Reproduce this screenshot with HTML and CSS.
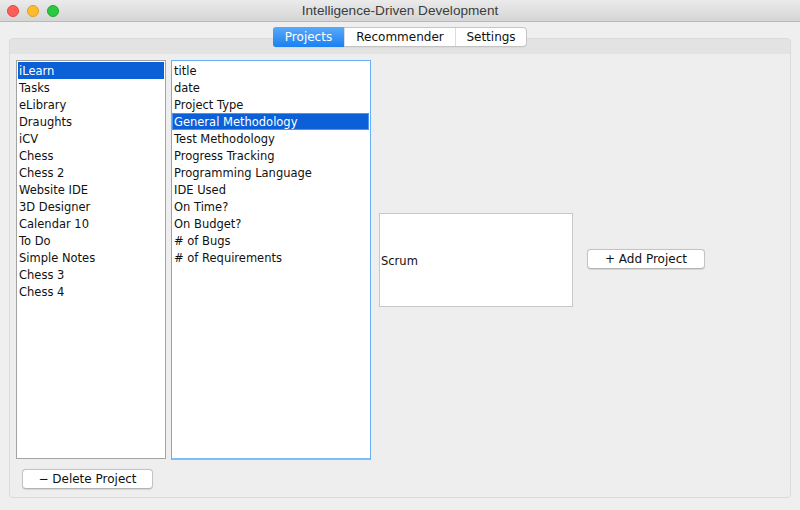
FILE: index.html
```html
<!DOCTYPE html>
<html>
<head>
<meta charset="utf-8">
<link rel="stylesheet" href="styles.css">
</head>
<body>
<div class="window">
  <div class="titlebar">
    <div class="lights">
      <span class="light red"></span>
      <span class="light yellow"></span>
      <span class="light green"></span>
    </div>
    <div class="title">Intelligence-Driven Development</div>
  </div>
  <div class="main">
    <div class="tabs">
      <div class="tab active t1">Projects</div>
      <div class="tab t2">Recommender</div>
      <div class="tab t3">Settings</div>
    </div>
    <div class="panel">
      <div class="content">
        <div class="leftcol">
          <div class="list list1">
            <div class="item sel">iLearn</div>
            <div class="item">Tasks</div>
            <div class="item">eLibrary</div>
            <div class="item">Draughts</div>
            <div class="item">iCV</div>
            <div class="item">Chess</div>
            <div class="item">Chess 2</div>
            <div class="item">Website IDE</div>
            <div class="item">3D Designer</div>
            <div class="item">Calendar 10</div>
            <div class="item">To Do</div>
            <div class="item">Simple Notes</div>
            <div class="item">Chess 3</div>
            <div class="item">Chess 4</div>
          </div>
          <div class="btn delete">&minus; Delete Project</div>
        </div>
        <div class="rightgroup">
          <div class="list list2">
            <div class="item">title</div>
            <div class="item">date</div>
            <div class="item">Project Type</div>
            <div class="item sel focus">General Methodology</div>
            <div class="item">Test Methodology</div>
            <div class="item">Progress Tracking</div>
            <div class="item">Programming Language</div>
            <div class="item">IDE Used</div>
            <div class="item">On Time?</div>
            <div class="item">On Budget?</div>
            <div class="item"># of Bugs</div>
            <div class="item"># of Requirements</div>
          </div>
          <div class="valuebox">Scrum</div>
          <div class="btn add">+ Add Project</div>
        </div>
      </div>
    </div>
  </div>
</div>
</body>
</html>
```
FILE: styles.css
```css
html, body {
  margin: 0;
  padding: 0;
}
body {
  width: 800px;
  height: 510px;
  overflow: hidden;
  background: #eeeeee;
  font-family: "DejaVu Sans", "Noto Sans", sans-serif;
  font-size: 11.5px;
  color: #111;
}
.window {
  width: 800px;
  height: 510px;
  display: flex;
  flex-direction: column;
  background: #efefef;
}
.titlebar {
  height: 21px;
  flex: none;
  border-bottom: 1px solid #b9b9b9;
  background: linear-gradient(#ebebeb, #d5d5d5);
  display: flex;
  align-items: center;
  position: relative;
}
.lights {
  display: flex;
  gap: 8px;
  padding-left: 7px;
  position: relative;
  z-index: 1;
}
.light {
  width: 12px;
  height: 12px;
  border-radius: 50%;
  box-sizing: border-box;
}
.red { background: #fc5f57; border: 1px solid #e0483f; }
.yellow { background: #fdbc2e; border: 1px solid #df9f22; }
.green { background: #28c840; border: 1px solid #1eaa31; }
.title {
  position: absolute;
  left: 0;
  right: 0;
  top: 0;
  height: 21px;
  line-height: 22px;
  text-align: center;
  font-family: "Liberation Sans", Arial, sans-serif;
  font-size: 13.6px;
  color: #3c3c3c;
}
.main {
  flex: 1;
  display: flex;
  flex-direction: column;
  padding: 5px 9px 12px 9px;
}
.tabs {
  flex: none;
  align-self: center;
  display: flex;
  height: 20px;
  box-sizing: border-box;
  border: 1px solid #c4c4c4;
  border-radius: 4px;
  background: #fff;
  position: relative;
  z-index: 2;
  box-shadow: 0 0.5px 0 rgba(0,0,0,0.08);
}
.tab {
  height: 18px;
  line-height: 19px;
  text-align: center;
  font-size: 12px;
  color: #111;
  border-left: 1px solid #dcdcdc;
  box-sizing: border-box;
}
.tab.t1 { width: 70px; border-left: none; }
.tab.t2 { width: 111px; }
.tab.t3 { width: 71px; }
.tab.active {
  color: #fff;
  background: linear-gradient(#5aaaf8, #1b80f1);
  border-radius: 3px 0 0 3px;
  margin: -1px 0 -1px -1px;
  height: 20px;
  line-height: 21px;
  width: 71px;
}
.panel {
  flex: 1;
  margin-top: -9px;
  border: 1px solid #dadada;
  border-radius: 4px;
  background: linear-gradient(#e3e3e3 0, #e3e3e3 15px, #eeeeee 15px);
  padding: 21px 6px 8px 6px;
}
.content {
  display: flex;
  align-items: flex-start;
}
.leftcol {
  display: flex;
  flex-direction: column;
  width: 150px;
}
.rightgroup {
  display: flex;
  align-items: center;
  height: 400px;
  margin-left: 5px;
}
.list {
  background: #fff;
  box-sizing: border-box;
  padding: 1px;
}
.list1 {
  width: 150px;
  height: 399px;
  border: 1px solid #a3a3a3;
}
.list2 {
  align-self: flex-start;
  width: 200px;
  height: 400px;
  border: 1px solid #68b0f4;
  border-bottom: 2px solid #7dbdf6;
  padding: 1px 1px 1px 0;
}
.item {
  height: 17px;
  line-height: 18px;
  padding-left: 1px;
  white-space: nowrap;
}
.list2 .item {
  padding-left: 2px;
}
.item.sel {
  background: #0b5fd7;
  color: #fff;
}
.item.focus {
  box-shadow: inset 0 0 0 1px #4b94f0;
}
.btn {
  background: #fff;
  border: 1px solid #c3c3c3;
  border-bottom-color: #b3b3b3;
  border-radius: 4px;
  box-sizing: border-box;
  text-align: center;
  font-size: 12px;
  color: #111;
  box-shadow: 0 0.5px 1px rgba(0,0,0,0.1);
}
.delete {
  width: 131px;
  height: 20px;
  line-height: 18px;
  margin-top: 10px;
  margin-left: 6px;
}
.valuebox {
  margin-left: 8px;
  width: 194px;
  height: 94px;
  box-sizing: border-box;
  border: 1px solid #c8c8c8;
  background: #fff;
  display: flex;
  align-items: center;
  padding-left: 1px;
  padding-top: 1px;
}
.add {
  margin-left: 14px;
  margin-bottom: 3px;
  width: 118px;
  height: 20px;
  line-height: 18px;
}
```
